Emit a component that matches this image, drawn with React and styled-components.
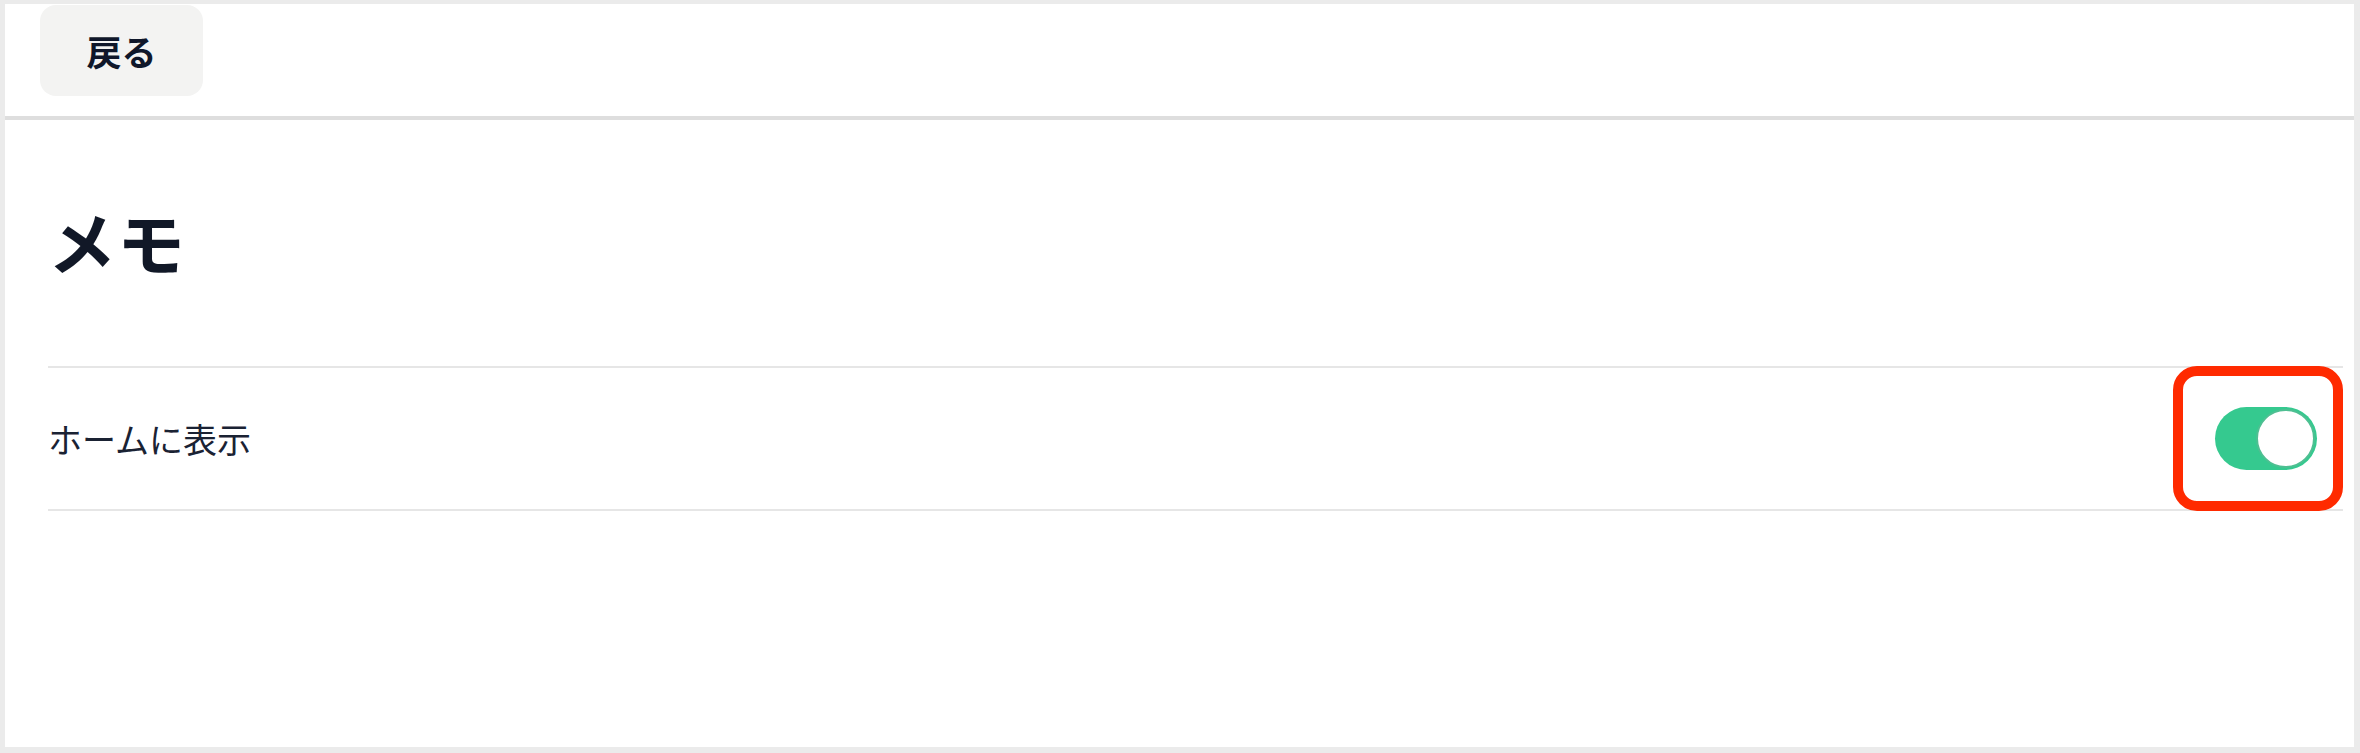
import React, { useState } from "react";
import styled, { createGlobalStyle } from "styled-components";

const GlobalStyle = createGlobalStyle`
  html, body {
    margin: 0;
    padding: 0;
    background: #ffffff;
  }
  body {
    font-family: "Noto Sans CJK JP", "Noto Sans", sans-serif;
    color: #0f172a;
  }
`;

const Frame = styled.div`
  box-sizing: border-box;
  height: 753px;
  overflow: hidden;
  border: solid #ebebeb;
  border-width: 4px 6px 6px 5px;
  display: flex;
  flex-direction: column;
  background: #ffffff;
`;

const Header = styled.header`
  display: flex;
  align-items: flex-start;
  padding: 1px 0 20px 35px;
  border-bottom: 4px solid #dedede;
`;

const BackButton = styled.button`
  width: 163px;
  height: 91px;
  border: none;
  border-radius: 16px;
  background: #f3f3f2;
  font-family: inherit;
  font-size: 35px;
  font-weight: 700;
  color: #0f172a;
  cursor: pointer;
  padding: 0;
`;

const Content = styled.main`
  padding: 82px 11px 0 43px;
`;

const Title = styled.h1`
  margin: 0 0 86px;
  font-size: 68px;
  line-height: 78px;
  font-weight: 700;
  color: #111827;
  letter-spacing: 1px;
`;

const Row = styled.div`
  display: flex;
  align-items: center;
  justify-content: space-between;
  height: 145px;
  box-sizing: border-box;
  border-top: 2px solid #e6e6e6;
  border-bottom: 2px solid #e6e6e6;
`;

const Label = styled.span`
  font-size: 34px;
  font-weight: 400;
  color: #1a2233;
`;

const Highlight = styled.div`
  box-sizing: border-box;
  width: 170px;
  height: 145px;
  margin: -2px 0;
  border: 10px solid #ff2a00;
  border-radius: 24px;
  display: flex;
  align-items: center;
  padding-left: 32px;
`;

const Track = styled.button`
  position: relative;
  width: 102px;
  height: 63px;
  border: none;
  padding: 0;
  border-radius: 32px;
  background: ${(p) => (p.$on ? "#35c98f" : "#d4d4d4")};
  cursor: pointer;
`;

const Knob = styled.span`
  position: absolute;
  top: 2px;
  left: ${(p) => (p.$on ? "41px" : "2px")};
  width: 59px;
  height: 59px;
  border-radius: 50%;
  background: #ffffff;
  box-sizing: border-box;
  border: 2px solid #4fbf92;
`;

export default function App() {
  const [on, setOn] = useState(true);
  return (
    <>
      <GlobalStyle />
      <Frame>
        <Header>
          <BackButton>戻る</BackButton>
        </Header>
        <Content>
          <Title>メモ</Title>
          <Row>
            <Label>ホームに表示</Label>
            <Highlight>
              <Track $on={on} onClick={() => setOn(!on)}>
                <Knob $on={on} />
              </Track>
            </Highlight>
          </Row>
        </Content>
      </Frame>
    </>
  );
}
